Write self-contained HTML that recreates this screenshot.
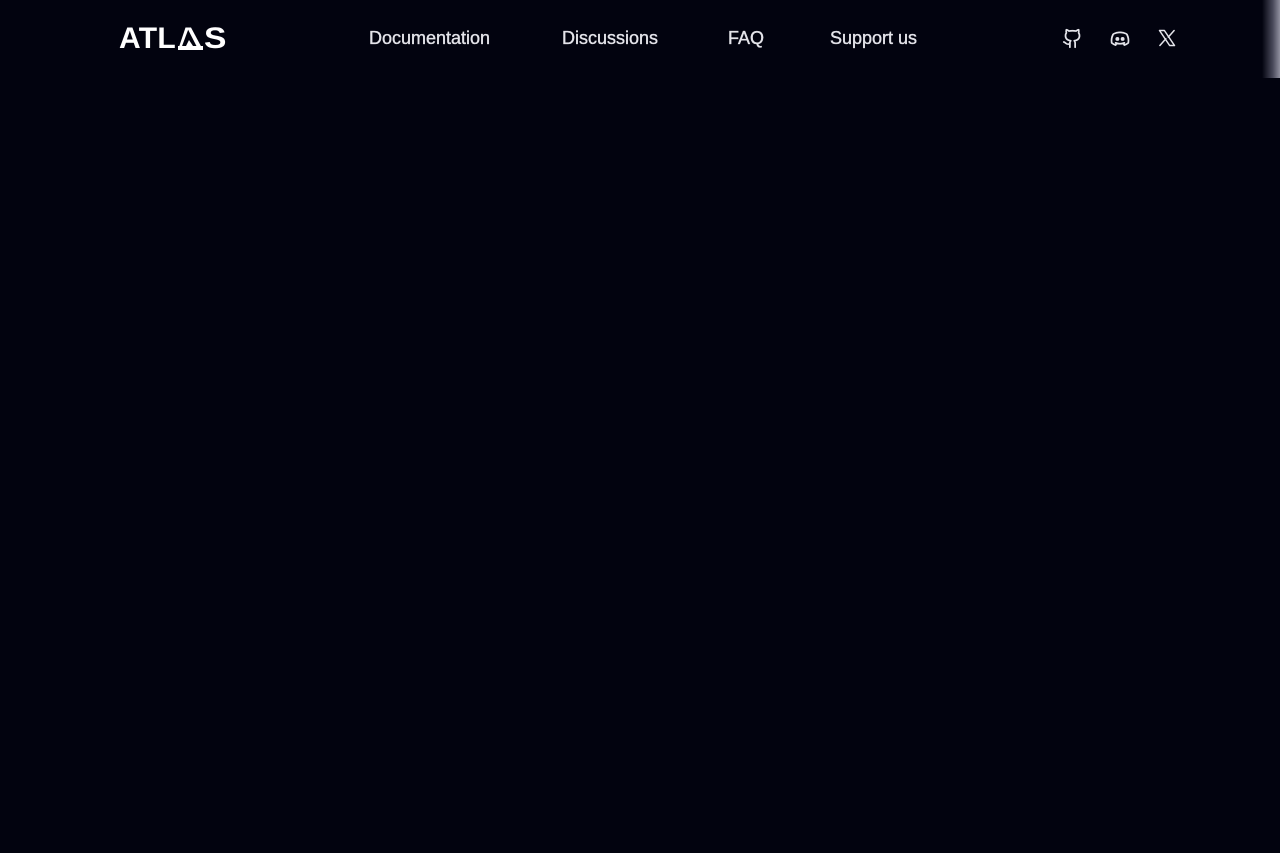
<!DOCTYPE html>
<html><head><style>
html,body{margin:0;padding:0;width:1280px;height:853px;background:#02030f;overflow:hidden;font-family:"Liberation Sans",sans-serif}
.n{position:absolute;top:28px;color:#e4e4ea;font-size:18px;font-weight:500;line-height:20px;white-space:nowrap;-webkit-text-stroke:0.35px #e4e4ea}
.edge{position:absolute;right:0;top:0;width:18px;height:78px;background:linear-gradient(to right,rgba(2,3,15,0),rgba(120,120,140,.6) 60%,rgba(170,170,185,.85))}
svg{position:absolute}
</style></head><body>
<div style="position:absolute;left:119px;top:24px;color:#fff;font-weight:700;font-size:30px;line-height:30px;letter-spacing:0.3px">ATL</div>
<svg style="left:176px;top:27px" width="28" height="23" viewBox="0 0 28 23"><path d="M13 0.5L9.5 0.5 L2 23H27 L24 20.5H5.5" fill="#fff"/><path d="M11 0.5H15L27 23H22.5Z" fill="#fff"/><path d="M2 19H27V23H2Z" fill="#fff"/><path d="M13 13L17 19H10Z" fill="#fff"/><path d="M9.5 0.5 L2 19" stroke="#02030f" stroke-width="0"/></svg>
<div style="position:absolute;left:204px;top:24px;color:#fff;font-weight:700;font-size:30px;line-height:30px;transform:scaleX(1.12);transform-origin:left">S</div>
<div class="n" style="left:369px">Documentation</div>
<div class="n" style="left:562px">Discussions</div>
<div class="n" style="left:728px">FAQ</div>
<div class="n" style="left:830px">Support us</div>
<svg style="left:1062px;top:28px" width="21" height="21" viewBox="0 0 24 24" fill="none" stroke="#e4e4ea" stroke-width="2" stroke-linecap="round" stroke-linejoin="round"><path d="M15 22v-4a4.8 4.8 0 0 0-1-3.5c3 0 6-2 6-5.5.08-1.25-.27-2.48-1-3.5.28-1.15.28-2.35 0-3.5 0 0-1 0-3 1.5-2.640-.5-5.36-.5-8 0C6 2 5 2 5 2c-.3 1.15-.3 2.35 0 3.5A5.4 5.4 0 0 0 4 9c0 3.5 3 5.5 6 5.5-.39.49-.68 1.05-.85 1.65-.17.6-.22 1.230-.15 1.85v4"/><path d="M9 18c-4.51 2-5-2-7-2"/></svg>
<svg style="left:1109px;top:28px" width="22" height="21" viewBox="0 0 24 24" fill="none" stroke="#e4e4ea" stroke-width="2" stroke-linecap="round" stroke-linejoin="round"><path d="M8 5.5C6 6 4.5 6.6 4 7.5 2.5 10.5 2 14 2.5 17c1.5 1.3 3 2 4.5 2.5l1.2-2.2M16 5.5c2 .5 3.5 1.1 4 2 1.5 3 2 6.5 1.5 9.5-1.5 1.3-3 2-4.5 2.5l-1.2-2.2M7 17c3.3 1.3 6.7 1.3 10 0M8 5.5c2.7-.6 5.3-.6 8 0"/><circle cx="9" cy="12.5" r="1.2" fill="#e4e4ea"/><circle cx="15" cy="12.5" r="1.2" fill="#e4e4ea"/></svg>
<svg style="left:1158px;top:29px" width="18" height="18" viewBox="0 0 24 24"><path d="M2 2h6.5L22 22h-6.5z" fill="none" stroke="#e4e4ea" stroke-width="2" stroke-linejoin="round"/><path d="M2.5 22L10.5 13M21.5 2l-7.8 8.8" stroke="#e4e4ea" stroke-width="2" stroke-linecap="round"/></svg>
<div class="edge"></div>
</body></html>
